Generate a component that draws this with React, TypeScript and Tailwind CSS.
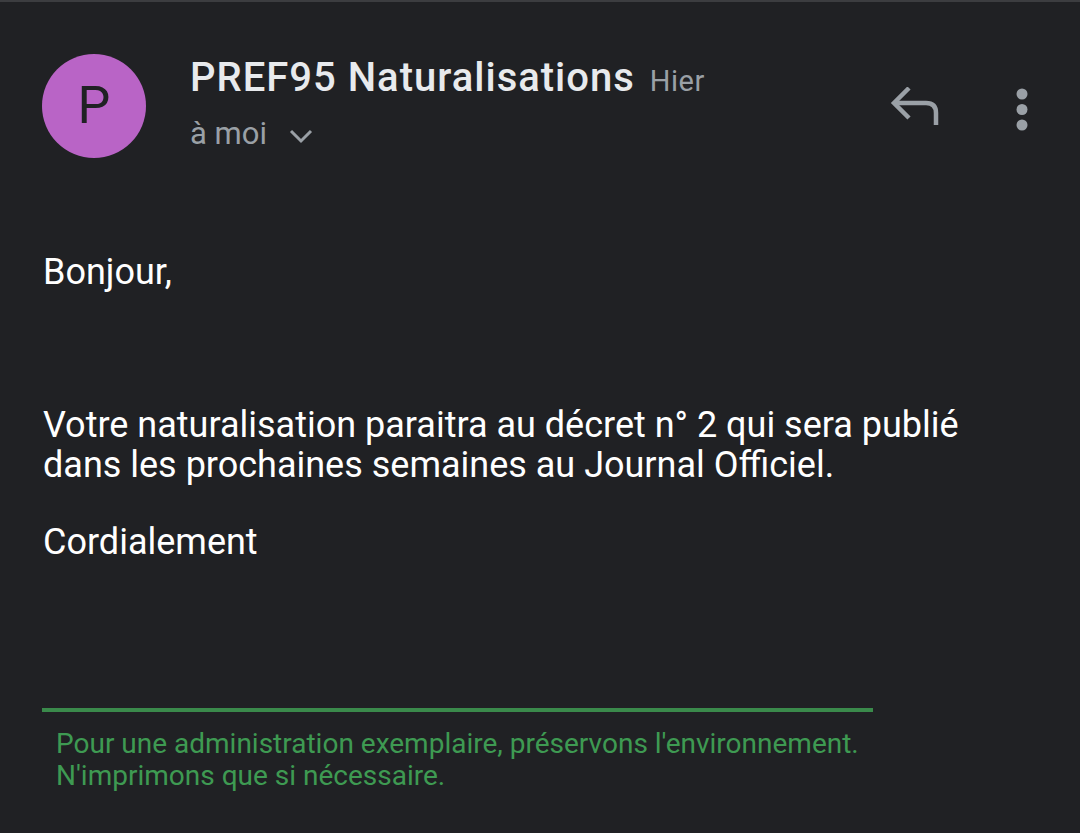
import React from 'react';

const ReplyIcon = () => (
  <svg width="52" height="44" viewBox="0 0 52 44" fill="none" stroke="#9aa0a6" strokeWidth="4.5">
    <path d="M19 1 L4 16 L19 31" strokeLinejoin="miter" />
    <path d="M4 16 H36 Q46 16 46 26 V38" />
  </svg>
);

const DotsIcon = () => (
  <svg width="14" height="44" viewBox="0 0 14 44" fill="#9aa0a6">
    <circle cx="7" cy="6" r="5.5" />
    <circle cx="7" cy="21.5" r="5.5" />
    <circle cx="7" cy="37" r="5.5" />
  </svg>
);

export default function App() {
  return (
    <div className="w-[1080px] h-[833px] bg-[#202124] border-t-2 border-[#3c3d40] overflow-hidden" style={{ fontFamily: 'Roboto, "Noto Sans", sans-serif' }}>
      {/* Header */}
      <div className="flex items-start pl-[42px] pr-[51px] pt-[52px]">
        <div className="w-[104px] h-[104px] rounded-full bg-[#b964c6] flex items-center justify-center shrink-0">
          <span className="text-[52px] text-[#202124] leading-none">P</span>
        </div>
        <div className="ml-[44px] flex flex-col">
          <div className="flex items-baseline">
            <span className="text-[40px] font-medium text-[#e8eaed] leading-[48px] tracking-[1px]">PREF95 Naturalisations</span>
            <span className="ml-[15px] text-[29px] text-[#9aa0a6] tracking-[0.5px]">Hier</span>
          </div>
          <div className="flex items-center mt-[12px]">
            <span className="text-[31px] text-[#9aa0a6] leading-[36px]">à moi</span>
            <svg className="ml-[22px] mt-[4px]" width="24" height="16" viewBox="0 0 24 16" fill="none" stroke="#9aa0a6" strokeWidth="3">
              <path d="M2 3 L12 13 L22 3" />
            </svg>
          </div>
        </div>
        <div className="ml-auto flex items-start mt-[34px] gap-[73px]">
          <div className="-mt-[1px]">
            <ReplyIcon />
          </div>
          <DotsIcon />
        </div>
      </div>

      {/* Body */}
      <div className="px-[43px] mt-[94px] text-[36px] text-[#ffffff] leading-[40px]">
        <p>Bonjour,</p>
        <p className="mt-[113px]">
          Votre naturalisation paraitra au décret n° 2 qui sera publié
          <br />
          dans les prochaines semaines au Journal Officiel.
        </p>
        <p className="mt-[37px]">Cordialement</p>
      </div>

      {/* Footer */}
      <div className="ml-[42px] mt-[146px] w-[831px] h-[4px] bg-[#3a8a4b]" />
      <div className="ml-[56px] mt-[16px] text-[28px] leading-[32px] text-[#3e9a52]">
        <p>Pour une administration exemplaire, préservons l'environnement.</p>
        <p>N'imprimons que si nécessaire.</p>
      </div>
    </div>
  );
}
